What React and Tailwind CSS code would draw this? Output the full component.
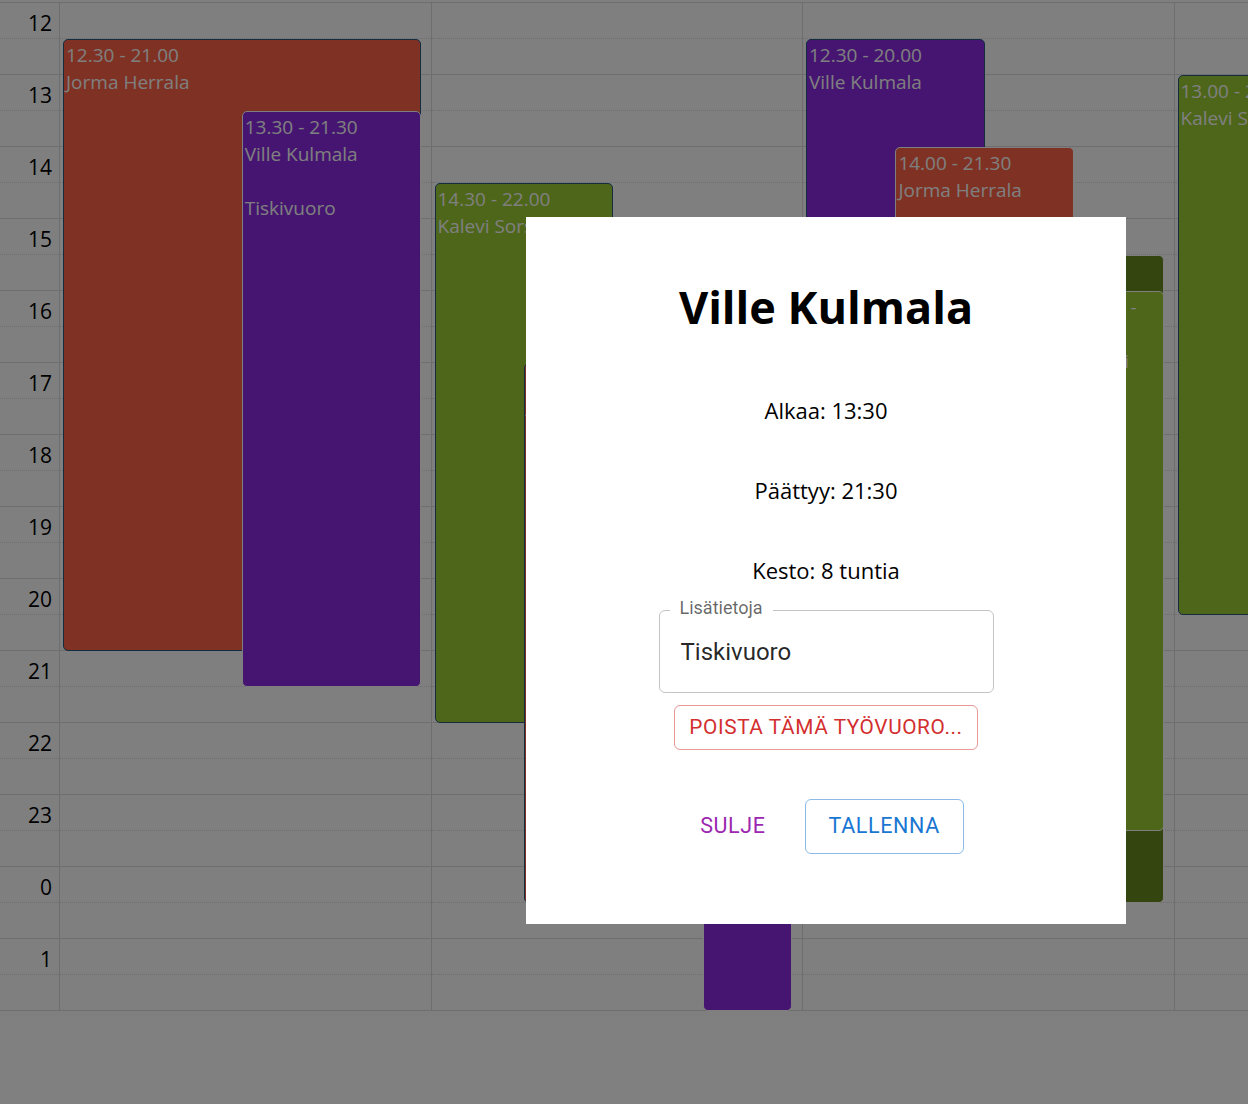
import React from "react";

const hours = [12, 13, 14, 15, 16, 17, 18, 19, 20, 21, 22, 23, 0, 1];

// start/end in hours from the top of the view (12:00 = 0)
const days = [
  [
    { start: 0.5, end: 9, left: 0, width: 100, color: "bg-[#ff6347]", time: "12.30 - 21.00", name: "Jorma Herrala" },
    { start: 1.5, end: 9.5, left: 50, width: 50, color: "bg-[#8a2be2]", time: "13.30 - 21.30", name: "Ville Kulmala", note: "Tiskivuoro", stacked: true },
  ],
  [
    { start: 2.5, end: 10, left: 0, width: 50, color: "bg-[#9acd32]", time: "14.30 - 22.00", name: "Kalevi Sorsa" },
    { start: 5, end: 12.5, left: 25, width: 50, color: "bg-[#ff6347]", time: "17.00 - 00.30", name: "Jorma Herrala" },
    { start: 6.5, end: 14, left: 75, width: 25, color: "bg-[#8a2be2]", time: "18.30 - 02.00", name: "Ville Kulmala", stacked: true },
  ],
  [
    { start: 0.5, end: 8, left: 0, width: 50, color: "bg-[#8a2be2]", time: "12.30 - 20.00", name: "Ville Kulmala" },
    { start: 2, end: 9.5, left: 25, width: 50, color: "bg-[#ff6347]", time: "14.00 - 21.30", name: "Jorma Herrala", stacked: true },
    { start: 3.5, end: 12.5, left: 50, width: 50, color: "bg-[#6a8a20]", time: "15.30 - 00.30", name: "Kalevi Sorsa", stacked: true },
    { start: 4, end: 11.5, left: 75, width: 25, color: "bg-[#9acd32]", time: "16.00 - 23.30", name: "Kalevi Sorsa", stacked: true },
  ],
  [
    { start: 1, end: 8.5, left: 0, width: 100, color: "bg-[#9acd32]", time: "13.00 - 20.30", name: "Kalevi Sorsa" },
  ],
];

const Slots = ({ label }) => (
  <div className="flex h-[72px] flex-col border-b border-[#ddd]">
    <div className="h-[36px] border-b border-dotted border-[#ddd] pr-[7px] pt-[2px] text-right text-[21px] leading-[36px] text-black">
      {label}
    </div>
    <div className="flex-1" />
  </div>
);

const Shift = ({ ev }) => (
  <div
    className={`absolute overflow-hidden rounded-[5px] border px-[2px] pt-[2px] text-[19px] leading-[27px] text-white ${ev.color} ${
      ev.stacked ? "border-white" : "border-[#265985]"
    }`}
    style={{
      top: ev.start * 72,
      height: (ev.end - ev.start) * 72,
      left: `${ev.left}%`,
      width: `${ev.width}%`,
    }}
  >
    <div>{ev.time}</div>
    <div>{ev.name}</div>
    {ev.note && (
      <>
        <div className="h-[27px]" />
        <div>{ev.note}</div>
      </>
    )}
  </div>
);

const ShiftDialog = () => (
  <div className="absolute left-[526px] top-[217px] flex h-[707px] w-[600px] flex-col items-center bg-white pt-[60px]">
    <h2 className="text-[45px] font-bold leading-[60px] text-black">Ville Kulmala</h2>
    <p className="mt-[58px] text-[22px] leading-[30px] text-black">Alkaa: 13:30</p>
    <p className="mt-[50px] text-[22px] leading-[30px] text-black">Päättyy: 21:30</p>
    <p className="mt-[50px] text-[22px] leading-[30px] text-black">Kesto: 8 tuntia</p>

    <div className="relative mt-[25px] flex h-[83px] w-[335px] items-center rounded-[6px] border border-[#c4c4c4] pl-[21px] font-['Roboto',sans-serif]">
      <span className="absolute -top-[12px] left-[10px] bg-white px-[10px] text-[18px] leading-[18px] text-black/60">
        Lisätietoja
      </span>
      <span className="text-[24px] text-black/85">Tiskivuoro</span>
    </div>

    <button className="mt-[12px] h-[45px] rounded-[6px] border border-[#d32f2f]/50 px-[14px] font-['Roboto',sans-serif] text-[20.8px] font-normal uppercase tracking-[0.02857em] text-[#d32f2f]">
      Poista tämä työvuoro...
    </button>

    <div className="mt-[49px] flex items-center gap-[27px] font-['Roboto',sans-serif] text-[21.5px]">
      <button className="h-[55px] px-[12px] uppercase tracking-[0.02857em] text-[#9c27b0]">Sulje</button>
      <button className="h-[55px] rounded-[6px] border border-[#1976d2]/50 px-[23px] uppercase tracking-[0.02857em] text-[#1976d2]">
        Tallenna
      </button>
    </div>
  </div>
);

export default function App() {
  return (
    <div className="relative h-[1104px] w-[1248px] overflow-hidden bg-white pt-[2px] font-['Open_Sans',sans-serif]">
      <div className="flex w-max border-t border-[#ddd]">
        <div className="w-[60px] shrink-0 border-r border-[#ddd]">
          {hours.map((h) => (
            <Slots key={h} label={h} />
          ))}
        </div>
        {days.map((shifts, i) => (
          <div key={i} className="relative w-[371.5px] shrink-0 border-r border-[#ddd]">
            {hours.map((h) => (
              <Slots key={h} />
            ))}
            <div className="absolute inset-y-0 left-[3px] right-[10px]">
              {shifts.map((ev) => (
                <Shift key={ev.time} ev={ev} />
              ))}
            </div>
          </div>
        ))}
      </div>

      <div className="absolute inset-0 bg-black/50" />
      <ShiftDialog />
    </div>
  );
}
